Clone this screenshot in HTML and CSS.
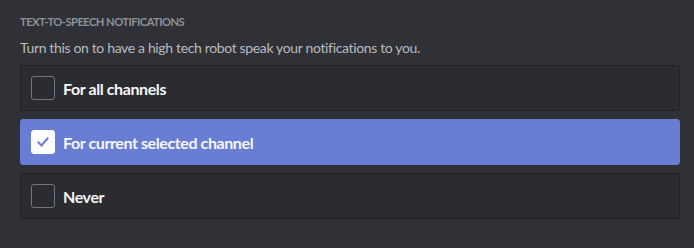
FILE: index.html
```html
<!DOCTYPE html>
<html>
<head>
<meta charset="utf-8">
<link rel="stylesheet" href="styles.css">
</head>
<body>
<div class="section">
  <h5 class="title">Text-to-Speech Notifications</h5>
  <div class="desc">Turn this on to have a high tech robot speak your notifications to you.</div>
  <div class="options">
    <div class="option">
      <span class="box"></span>
      <span class="label">For all channels</span>
    </div>
    <div class="option selected">
      <span class="box checked">
        <svg width="18" height="18" viewBox="0 0 18 18"><polyline points="4.5,9.5 7.5,12.5 13.5,5.5" fill="none" stroke="#687ed4" stroke-width="2" stroke-linecap="square"/></svg>
      </span>
      <span class="label">For current selected channel</span>
    </div>
    <div class="option">
      <span class="box"></span>
      <span class="label">Never</span>
    </div>
  </div>
</div>
</body>
</html>
```
FILE: styles.css
```css
html, body {
  margin: 0;
  padding: 0;
  background: #2f3136;
  width: 694px;
  height: 248px;
  overflow: hidden;
}
.section {
  padding: 14px 14px 0 20px;
  font-family: Lato, "Liberation Sans", sans-serif;
}
.title {
  margin: 0;
  font-size: 11.2px;
  line-height: 16px;
  font-weight: 700;
  letter-spacing: -0.55px;
  text-transform: uppercase;
  color: #8e9297;
}
.desc {
  margin-top: 8px;
  font-size: 14px;
  line-height: 20px;
  letter-spacing: -0.35px;
  color: #b9bbbe;
}
.options {
  margin-top: 7px;
  display: flex;
  flex-direction: column;
  gap: 8px;
}
.option {
  box-sizing: border-box;
  height: 46px;
  display: flex;
  align-items: center;
  padding: 0 10px;
  background: #2a2c30;
  border: 1px solid #202225;
  border-radius: 3px;
}
.option.selected {
  background: #687ed4;
  border-color: #687ed4;
}
.box {
  box-sizing: border-box;
  width: 24px;
  height: 24px;
  border: 1px solid #72767d;
  border-radius: 3px;
  margin-right: 8px;
  display: flex;
  align-items: center;
  justify-content: center;
}
.box.checked {
  background: #ffffff;
  border-color: #ffffff;
}
.label {
  font-size: 16px;
  font-weight: 700;
  letter-spacing: -0.4px;
  color: #f6f6f7;
}
```
